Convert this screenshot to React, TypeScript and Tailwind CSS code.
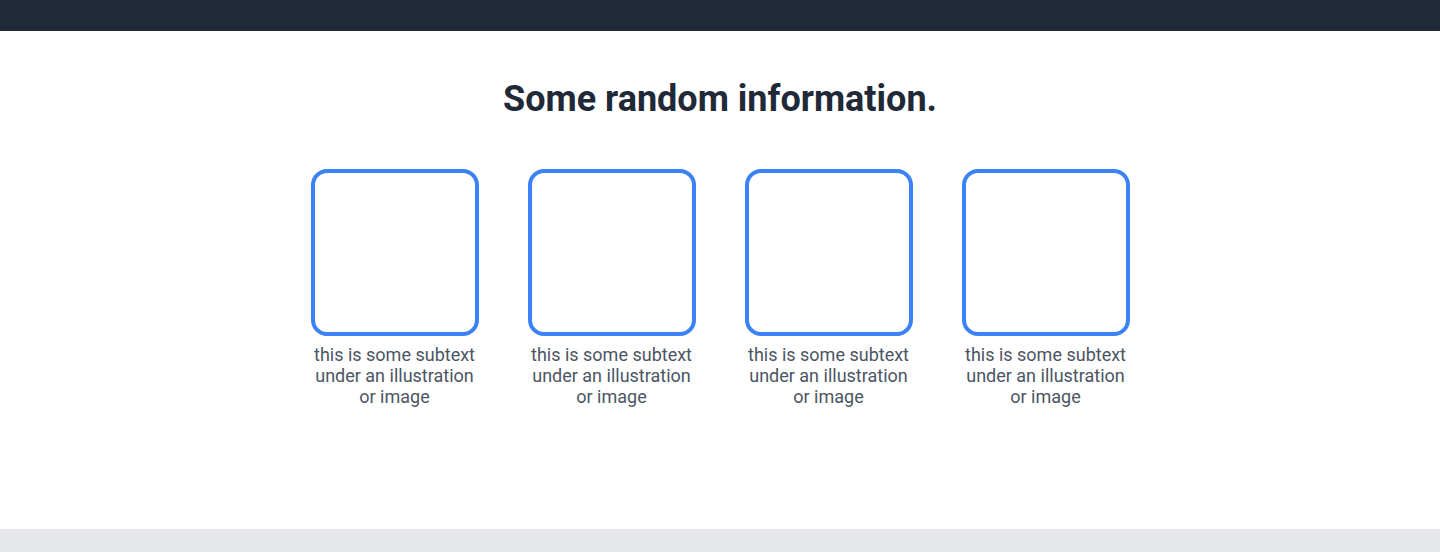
const ITEMS = [1, 2, 3, 4];

export default function App() {
  return (
    <div className="min-h-[552px] flex flex-col bg-white" style={{ fontFamily: 'Roboto, "Liberation Sans", sans-serif' }}>
      <header className="h-[31px] bg-[#1f2937]" />

      <main className="flex-1 flex flex-col items-center">
        <h1 className="mt-[48px] text-[36px] leading-[40px] font-bold text-[#1f2937]">
          Some random information.
        </h1>

        <div className="mt-[50px] flex gap-[49px]">
          {ITEMS.map((i) => (
            <div key={i} className="w-[168px] flex flex-col items-center">
              <div className="w-[168px] h-[167px] rounded-2xl border-4 border-[#3b82f6]" />
              <p className="mt-[8px] text-[18px] leading-[21px] text-center text-[#4b5563]">
                this is some subtext under an illustration or image
              </p>
            </div>
          ))}
        </div>
      </main>

      <footer className="h-[23px] bg-[#e5e7eb]" />
    </div>
  );
}
